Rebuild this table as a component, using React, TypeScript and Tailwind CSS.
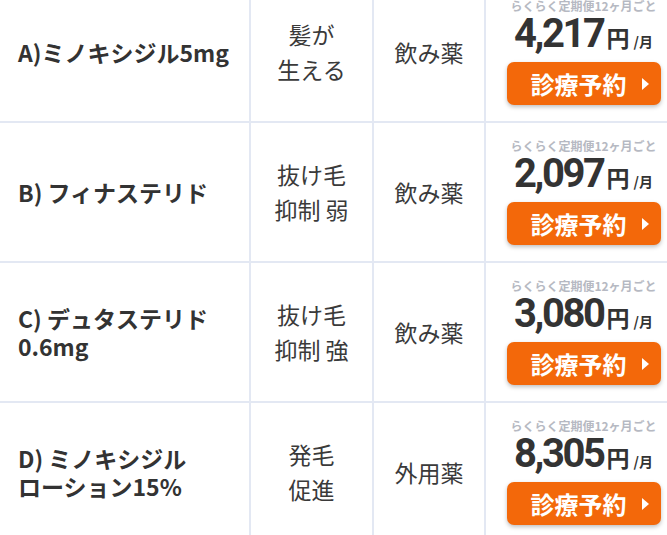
import React from 'react';

type Plan = {
  name: string[];
  effect: string[];
  kind: string;
  price: string;
};

const plans: Plan[] = [
  { name: ['A)ミノキシジル5mg'], effect: ['髪が', '生える'], kind: '飲み薬', price: '4,217' },
  { name: ['B) フィナステリド'], effect: ['抜け毛', '抑制 弱'], kind: '飲み薬', price: '2,097' },
  { name: ['C) デュタステリド', '0.6mg'], effect: ['抜け毛', '抑制 強'], kind: '飲み薬', price: '3,080' },
  { name: ['D) ミノキシジル', 'ローション15%'], effect: ['発毛', '促進'], kind: '外用薬', price: '8,305' },
];

const jp = 'font-["Noto_Sans_CJK_JP","Noto_Sans",sans-serif]';

function PriceCell({ price }: { price: string }) {
  return (
    <div className="flex flex-col items-center pt-[16px]">
      <div className={`${jp} text-[12px] leading-[13px] font-bold text-[#b6b9c2]`}>らくらく定期便12ヶ月ごと</div>
      <div className="mt-[1px] flex items-baseline text-[#333]">
        <span className='font-["Roboto",sans-serif] text-[40px] leading-[42px] font-bold tracking-[-0.06em]'>{price}</span>
        <span className={`${jp} ml-[3px] text-[23px] leading-none font-bold`}>円</span>
        <span className={`${jp} ml-[4px] text-[14px] leading-none font-bold`}>/月</span>
      </div>
      <button className="mt-[7px] flex h-[43px] w-[154px] items-center gap-[15px] rounded-[7px] bg-[#f3680a] pl-[24px] shadow-[0_2px_4px_rgba(0,0,0,0.25)]">
        <span className={`${jp} text-[24px] leading-none font-bold text-white`}>診療予約</span>
        <svg width="7" height="12" viewBox="0 0 7 12">
          <path d="M0 0 L7 6 L0 12 Z" fill="#fff" />
        </svg>
      </button>
    </div>
  );
}

export default function App() {
  return (
    <div className="h-[535px] w-full overflow-hidden bg-white">
      <div className="-mt-[17px] w-[681px]">
        {plans.map((p) => (
          <div key={p.price} className="grid h-[140px] grid-cols-[251px_123px_112px_1fr] border-b-2 border-[#e3e8f3]">
            <div className={`${jp} flex flex-col justify-center border-r-2 border-[#e3e8f3] pl-[18px] text-[23px] leading-[28px] font-bold text-[#333]`}>
              {p.name.map((n) => (
                <div key={n}>{n}</div>
              ))}
            </div>
            <div className={`${jp} flex flex-col items-center justify-center border-r-2 border-[#e3e8f3] text-[23px] leading-[35px] font-normal text-[#3a3a3a]`}>
              {p.effect.map((e) => (
                <div key={e}>{e}</div>
              ))}
            </div>
            <div className={`${jp} flex items-center justify-center border-r-2 border-[#e3e8f3] text-[23px] font-normal text-[#3a3a3a]`}>
              {p.kind}
            </div>
            <PriceCell price={p.price} />
          </div>
        ))}
      </div>
    </div>
  );
}
